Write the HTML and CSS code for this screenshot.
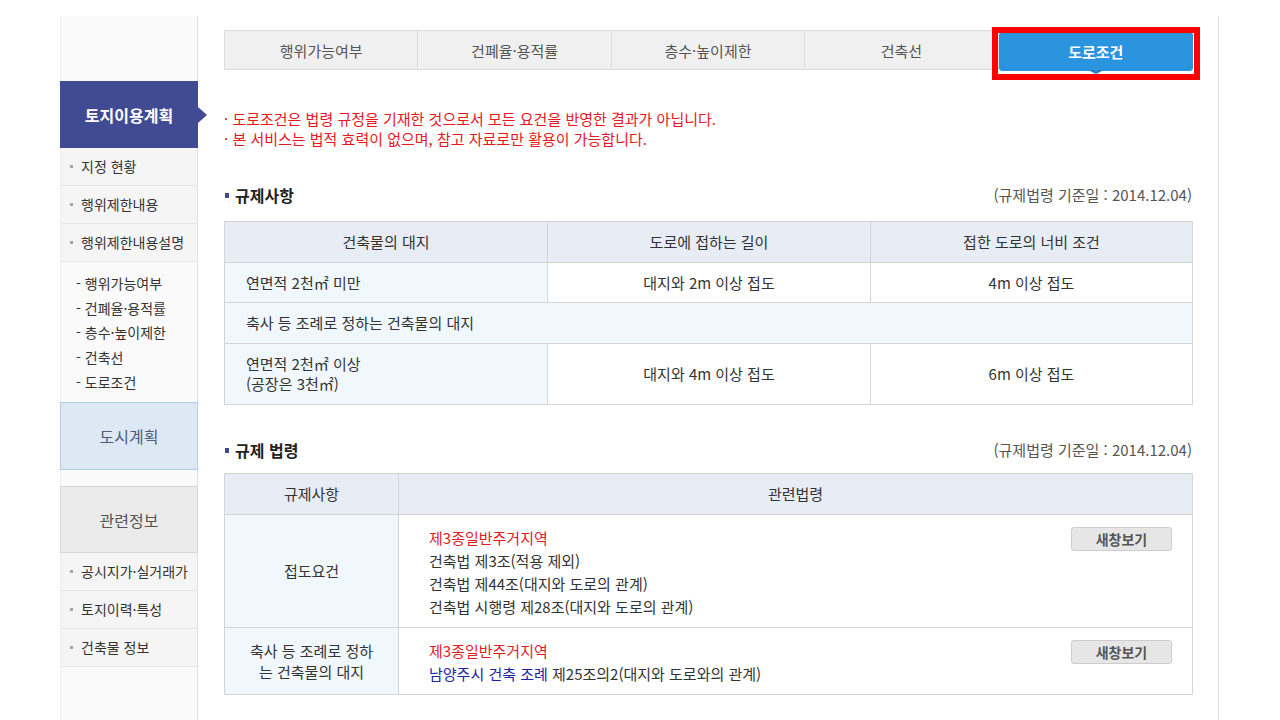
FILE: index.html
```html
<!DOCTYPE html>
<html lang="ko">
<head>
<meta charset="utf-8">
<title>토지이용계획 - 도로조건</title>
<link rel="stylesheet" href="styles.css">
</head>
<body>
<div class="wrap">
  <aside class="sidebar">
    <div class="side-top"></div>
    <div class="side-title active">토지이용계획</div>
    <ul class="side-menu">
      <li>지정 현황</li>
      <li>행위제한내용</li>
      <li>행위제한내용설명</li>
    </ul>
    <ul class="side-sub">
      <li>- 행위가능여부</li>
      <li>- 건폐율·용적률</li>
      <li>- 층수·높이제한</li>
      <li>- 건축선</li>
      <li>- 도로조건</li>
    </ul>
    <div class="side-title city">도시계획</div>
    <div class="side-gap"></div>
    <div class="side-title info">관련정보</div>
    <ul class="side-menu">
      <li>공시지가·실거래가</li>
      <li>토지이력·특성</li>
      <li>건축물 정보</li>
    </ul>
  </aside>

  <main class="main">
    <div class="tabs">
      <div class="tab">행위가능여부</div>
      <div class="tab">건폐율·용적률</div>
      <div class="tab">층수·높이제한</div>
      <div class="tab">건축선</div>
      <div class="tab tab-on">도로조건<span class="highlight"></span></div>
    </div>

    <div class="notice">
      <p>· 도로조건은 법령 규정을 기재한 것으로서 모든 요건을 반영한 결과가 아닙니다.</p>
      <p>· 본 서비스는 법적 효력이 없으며, 참고 자료로만 활용이 가능합니다.</p>
    </div>

    <div class="sec-head">
      <h2 class="sec-title">규제사항</h2>
      <span class="sec-date">(규제법령 기준일 : 2014.12.04)</span>
    </div>
    <table class="grid grid-one">
      <colgroup><col class="c3"><col class="c3"><col></colgroup>
      <thead>
        <tr><th>건축물의 대지</th><th>도로에 접하는 길이</th><th>접한 도로의 너비 조건</th></tr>
      </thead>
      <tbody>
        <tr class="r40"><td class="label">연면적 2천㎡ 미만</td><td>대지와 2m 이상 접도</td><td>4m 이상 접도</td></tr>
        <tr class="r41"><td class="label" colspan="3">축사 등 조례로 정하는 건축물의 대지</td></tr>
        <tr class="r61"><td class="label">연면적 2천㎡ 이상<br>(공장은 3천㎡)</td><td>대지와 4m 이상 접도</td><td>6m 이상 접도</td></tr>
      </tbody>
    </table>

    <div class="sec-head sec-two">
      <h2 class="sec-title">규제 법령</h2>
      <span class="sec-date">(규제법령 기준일 : 2014.12.04)</span>
    </div>
    <table class="grid grid-two">
      <colgroup><col class="cfirst"><col></colgroup>
      <thead>
        <tr><th>규제사항</th><th>관련법령</th></tr>
      </thead>
      <tbody>
        <tr>
          <td class="label center">접도요건</td>
          <td class="law">
            <div class="law-row">
              <div class="law-text">
                <div class="red">제3종일반주거지역</div>
                <div>건축법 제3조(적용 제외)</div>
                <div>건축법 제44조(대지와 도로의 관계)</div>
                <div>건축법 시행령 제28조(대지와 도로의 관계)</div>
              </div>
              <button class="btn" type="button">새창보기</button>
            </div>
          </td>
        </tr>
        <tr>
          <td class="label center two">축사 등 조례로 정하<br>는 건축물의 대지</td>
          <td class="law">
            <div class="law-row">
              <div class="law-text">
                <div class="red">제3종일반주거지역</div>
                <div><span class="blue">남양주시 건축 조례</span> 제25조의2(대지와 도로와의 관계)</div>
              </div>
              <button class="btn" type="button">새창보기</button>
            </div>
          </td>
        </tr>
      </tbody>
    </table>
  </main>
</div>
</body>
</html>
```

FILE: styles.css
```css
* { box-sizing: border-box; }
html, body { margin: 0; padding: 0; background: #fff; }
body {
  font-family: "Noto Sans CJK KR", "Noto Sans", sans-serif;
  font-size: 14px;
  color: #333;
  width: 1280px;
  height: 720px;
  overflow: hidden;
}
ul { list-style: none; margin: 0; padding: 0; }
p, h2 { margin: 0; }

.wrap {
  display: flex;
  padding: 16px 0 0 60px;
}

/* sidebar */
.sidebar {
  width: 138px;
  min-height: 704px;
  background: #fafafa;
  border-left: 1px solid #ededed;
  border-right: 1px solid #e2e2e2;
}
.side-top { height: 65px; }
.side-title {
  display: flex;
  align-items: center;
  justify-content: center;
  font-size: 16px;
  height: 68px;
}
.side-title.active {
  position: relative;
  height: 67px;
  margin: 0 -1px;
  background: #414b94;
  color: #fff;
  font-weight: bold;
}
.side-title.active::after {
  content: "";
  position: absolute;
  right: -9px;
  top: 26px;
  border-left: 9px solid #414b94;
  border-top: 8px solid transparent;
  border-bottom: 8px solid transparent;
}
.side-title.city {
  background: #dde8f5;
  border: 1px solid #b9cce4;
  color: #4f5e7e;
  margin: 0 -1px;
}
.side-title.info {
  background: #ebebeb;
  border: 1px solid #d6d6d6;
  color: #555;
  height: 67px;
  margin: 0 -1px;
}
.side-gap { height: 16px; }
.side-menu li {
  height: 38px;
  line-height: 37px;
  padding-left: 20px;
  position: relative;
  background: #f5f5f5;
  border-bottom: 1px solid #e6e6e6;
  font-size: 14px;
  color: #333;
}
.side-menu li::before {
  content: "";
  position: absolute;
  left: 9px;
  top: 17px;
  width: 3px;
  height: 3px;
  background: #a5a5a5;
}
.side-sub {
  padding: 9px 0 8px 15px;
  height: 140px;
}
.side-sub li {
  line-height: 24.7px;
  font-size: 14px;
  color: #333;
}

/* main */
.main {
  width: 1021px;
  min-height: 704px;
  padding: 14px 25px 0 26px;
  border-right: 1px solid #e2e2e2;
  font-size: 15px;
}
.tabs {
  display: flex;
  height: 40px;
}
.tab {
  flex: 1;
  display: flex;
  align-items: center;
  justify-content: center;
  background: #f0f0f0;
  border: 1px solid #dcdcdc;
  border-left: none;
  color: #555;
  font-size: 15px;
  position: relative;
}
.tab:first-child { border-left: 1px solid #dcdcdc; }
.tab-on {
  background: #2a95de;
  border: 1px solid #2a95de;
  border-radius: 3px;
  margin-top: 2px;
  height: 39px;
  color: #fff;
  font-weight: bold;
}
.tab-on::after {
  content: "";
  position: absolute;
  left: 50%;
  bottom: -4px;
  margin-left: -8px;
  border-top: 4px solid #2a7fc2;
  border-left: 8px solid transparent;
  border-right: 8px solid transparent;
}
.highlight {
  position: absolute;
  left: -8px;
  top: -6px;
  width: 208px;
  height: 53px;
  border: 6px solid #f00;
  pointer-events: none;
}

.notice {
  margin-top: 39px;
  color: #e8161e;
  font-size: 15px;
  line-height: 20px;
}

.sec-head {
  display: flex;
  justify-content: space-between;
  align-items: center;
  margin-top: 36px;
  line-height: 20px;
}
.sec-title {
  font-size: 16px;
  font-weight: bold;
  color: #222;
  padding-left: 11px;
  position: relative;
}
.sec-title::before {
  content: "";
  position: absolute;
  left: 1px;
  top: 8px;
  width: 4px;
  height: 5px;
  background: #3d4a94;
}
.sec-date {
  color: #555;
  font-size: 15px;
  padding-right: 1px;
}

.grid {
  width: 969px;
  border-collapse: collapse;
  table-layout: fixed;
  font-size: 15px;
  color: #333;
}
.grid-one { margin-top: 16px; }
.grid-two { margin-top: 13px; }
.sec-two { margin-top: 35px; }
.c3 { width: 323px; }
.cfirst { width: 174px; }
.grid th, .grid td {
  border: 1px solid #d4d4d4;
  text-align: center;
  vertical-align: middle;
  font-weight: normal;
  padding: 0;
  line-height: 20px;
}
.grid th {
  background: #e8edf5;
  height: 41px;
}
.grid td { background: #fff; }
.grid td.label {
  background: #f1f8fd;
  text-align: left;
  padding-left: 21px;
}
.grid td.label.center {
  text-align: center;
  padding-left: 0;
}
.grid td.two { line-height: 21px; }
.r40 td { height: 40px; }
.r41 td { height: 41px; }
.r61 td { height: 61px; }

.grid td.law {
  text-align: left;
  vertical-align: top;
  padding: 11px 20px 9px 30px;
}
.law-row {
  display: flex;
  justify-content: space-between;
  align-items: flex-start;
}
.law-text div { line-height: 23px; }
.red { color: #e31b23; }
.blue { color: #2323a8; }
.btn {
  width: 101px;
  height: 24px;
  margin-top: 1px;
  background: #e6e6e6;
  border: 1px solid #cdcdcd;
  border-radius: 3px;
  font-family: "Noto Sans CJK KR", sans-serif;
  font-size: 14px;
  font-weight: bold;
  color: #555;
  padding: 0;
  line-height: 20px;
}
```
